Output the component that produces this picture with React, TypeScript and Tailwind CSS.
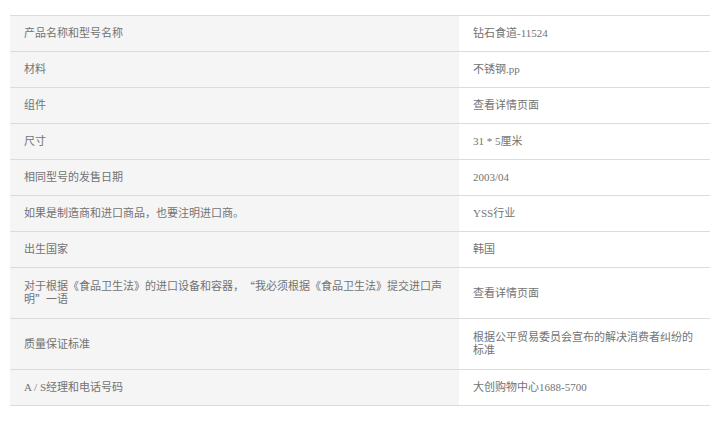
const rows: { label: string; value: string; tall?: boolean }[] = [
  { label: '产品名称和型号名称', value: '钻石食道-11524' },
  { label: '材料', value: '不锈钢.pp' },
  { label: '组件', value: '查看详情页面' },
  { label: '尺寸', value: '31 * 5厘米' },
  { label: '相同型号的发售日期', value: '2003/04' },
  { label: '如果是制造商和进口商品，也要注明进口商。', value: 'YSS行业' },
  { label: '出生国家', value: '韩国' },
  {
    label: '对于根据《食品卫生法》的进口设备和容器，“我必须根据《食品卫生法》提交进口声明”一语',
    value: '查看详情页面',
    tall: true,
  },
  { label: '质量保证标准', value: '根据公平贸易委员会宣布的解决消费者纠纷的标准', tall: true },
  { label: 'A / S经理和电话号码', value: '大创购物中心1688-5700' },
];

// curly quotes should take the full-width CJK glyphs
const Text = ({ text }: { text: string }) => (
  <span className="block leading-[13px]">
    {text.split(/([“”])/).map((part, i) =>
      part === '“' || part === '”' ? (
        <span key={i} className="inline-block h-[13px] align-top leading-[13px] font-['Noto_Sans_CJK_SC']">
          {part}
        </span>
      ) : (
        part
      )
    )}
  </span>
);

const App = () => {
  return (
    <div
      className="min-h-[440px] w-[721px] bg-white pt-[15px] pl-[10px] text-[11px] leading-[13px] text-[#737373]"
      style={{ fontFamily: '"Liberation Serif", "Noto Sans CJK SC", serif' }}
    >
      <div className="w-[700px] border-t border-[#dcdcdc]">
        {rows.map((row) => (
          <div key={row.label} className="flex border-b border-[#dcdcdc]">
            <div
              className={`flex w-[449px] items-center bg-[#f5f5f5] px-[14px] ${
                row.tall ? 'py-[12px]' : 'py-[11px]'
              }`}
            >
              <Text text={row.label} />
            </div>
            <div
              className={`flex w-[251px] items-center bg-white px-[14px] ${
                row.tall ? 'py-[12px]' : 'py-[11px]'
              }`}
            >
              <Text text={row.value} />
            </div>
          </div>
        ))}
      </div>
    </div>
  );
};

export default App;
